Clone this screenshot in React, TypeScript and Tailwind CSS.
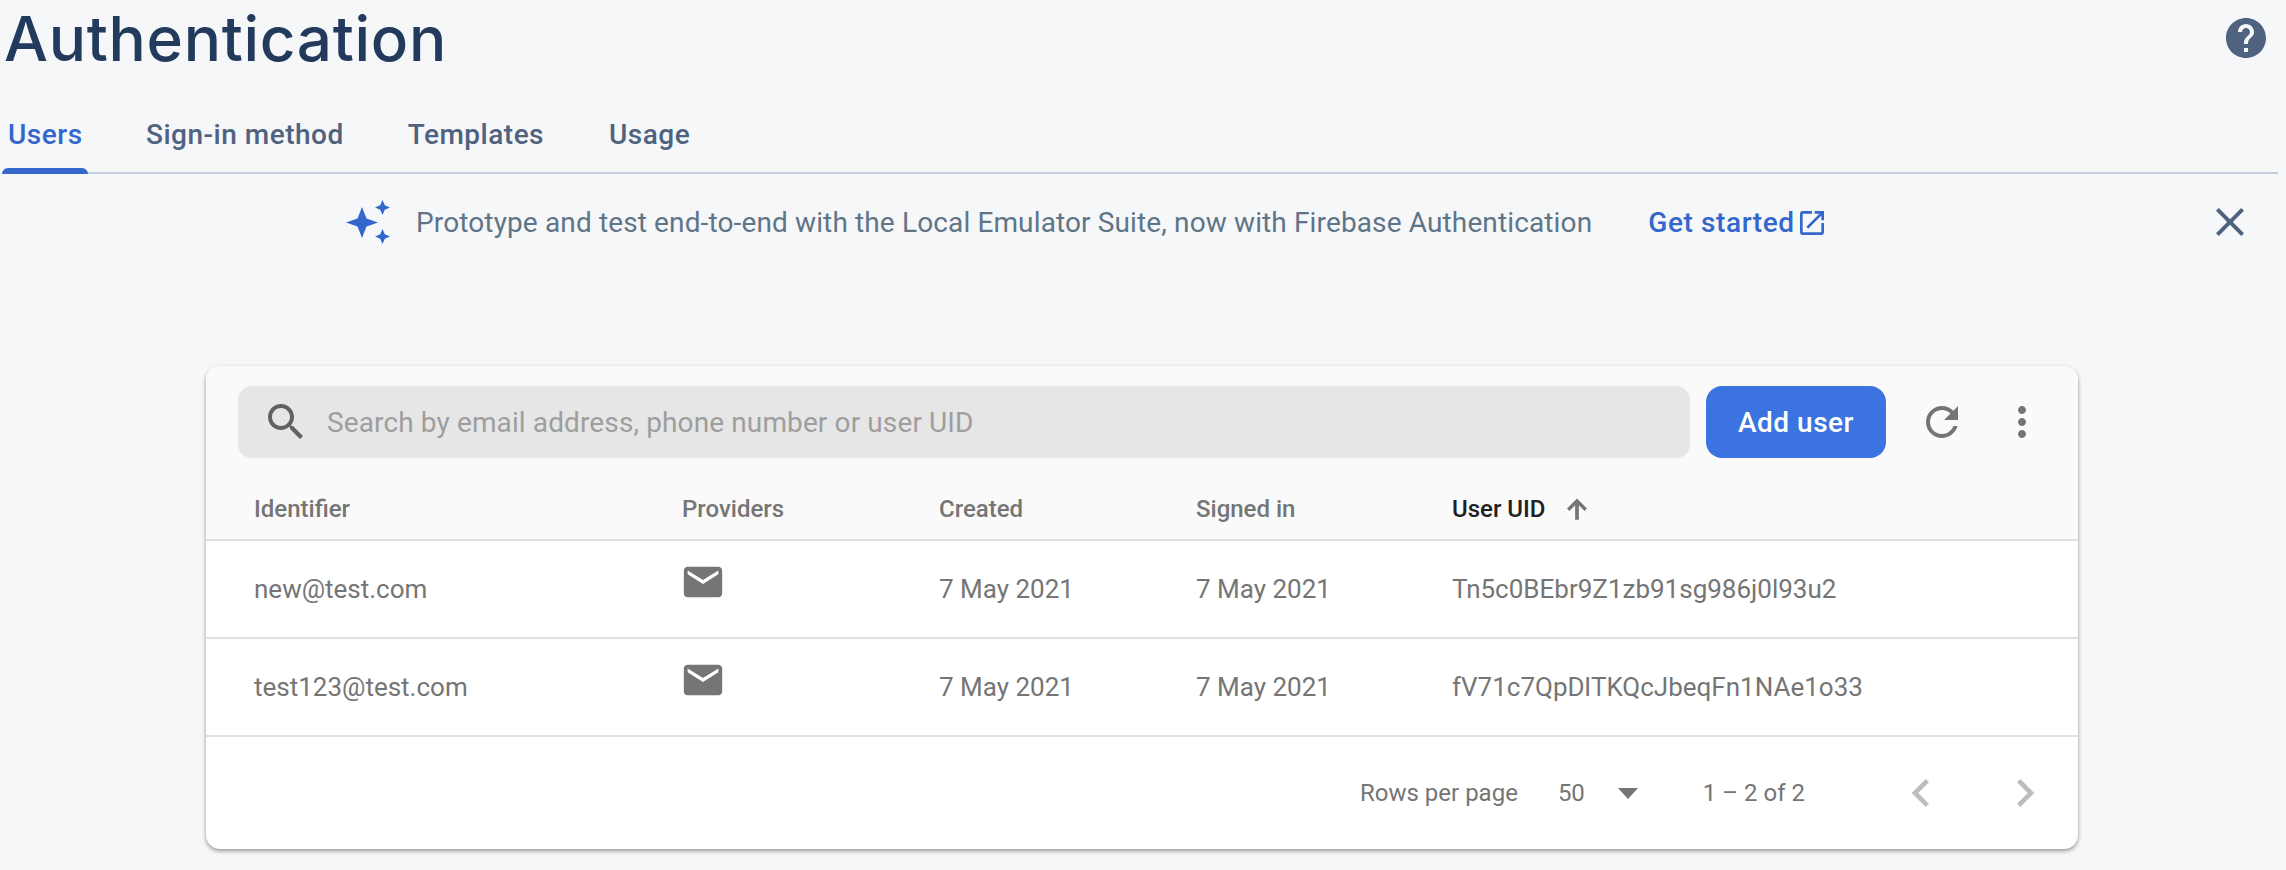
import React from "react";

const users = [
  { email: "new@test.com", created: "7 May 2021", signedIn: "7 May 2021", uid: "Tn5c0BEbr9Z1zb91sg986j0l93u2" },
  { email: "test123@test.com", created: "7 May 2021", signedIn: "7 May 2021", uid: "fV71c7QpDlTKQcJbeqFn1NAe1o33" },
];

function Icon({ d, className }: { d: string; className: string }) {
  return (
    <svg viewBox="0 0 24 24" fill="currentColor" className={className}>
      <path d={d} />
    </svg>
  );
}

const paths = {
  help: "M12 2C6.48 2 2 6.48 2 12s4.48 10 10 10 10-4.48 10-10S17.52 2 12 2zm1 17h-2v-2h2v2zm2.07-7.75l-.9.92C13.45 12.9 13 13.5 13 15h-2v-.5c0-1.1.45-2.1 1.17-2.83l1.24-1.26c.37-.36.59-.86.59-1.41 0-1.1-.9-2-2-2s-2 .9-2 2H8c0-2.21 1.79-4 4-4s4 1.79 4 4c0 .88-.36 1.68-.93 2.25z",
  close: "M19 6.41L17.59 5 12 10.59 6.41 5 5 6.41 10.59 12 5 17.59 6.41 19 12 13.41 17.59 19 19 17.59 13.41 12z",
  open: "M19 19H5V5h7V3H5c-1.11 0-2 .9-2 2v14c0 1.1.89 2 2 2h14c1.1 0 2-.9 2-2v-7h-2v7zM14 3v2h3.59l-9.83 9.83 1.41 1.41L19 6.41V10h2V3h-7z",
  search: "M15.5 14h-.79l-.28-.27C15.41 12.59 16 11.11 16 9.5 16 5.91 13.09 3 9.5 3S3 5.91 3 9.5 5.91 16 9.5 16c1.61 0 3.09-.59 4.23-1.57l.27.28v.79l5 4.99L20.49 19l-4.99-5zm-6 0C7.01 14 5 11.99 5 9.5S7.01 5 9.5 5 14 7.01 14 9.5 11.99 14 9.5 14z",
  refresh: "M17.65 6.35C16.2 4.9 14.21 4 12 4c-4.42 0-7.99 3.58-7.99 8s3.57 8 7.99 8c3.73 0 6.84-2.55 7.73-6h-2.08c-.82 2.33-3.04 4-5.65 4-3.31 0-6-2.69-6-6s2.69-6 6-6c1.66 0 3.14.69 4.22 1.78L13 11h7V4l-2.35 2.35z",
  more: "M12 8c1.1 0 2-.9 2-2s-.9-2-2-2-2 .9-2 2 .9 2 2 2zm0 2c-1.1 0-2 .9-2 2s.9 2 2 2 2-.9 2-2-.9-2-2-2zm0 6c-1.1 0-2 .9-2 2s.9 2 2 2 2-.9 2-2-.9-2-2-2z",
  mail: "M20 4H4c-1.1 0-2 .9-2 2v12c0 1.1.9 2 2 2h16c1.1 0 2-.9 2-2V6c0-1.1-.9-2-2-2zm0 4-8 5-8-5V6l8 5 8-5v2z",
  arrowUp: "M12 3.500L4 11.500l2 2 4.500-4.500V20.500h3V9l4.500 4.500 2-2z",
  prev: "M15.41 7.41L14 6l-6 6 6 6 1.41-1.41L10.83 12z",
  next: "M10 6L8.59 7.41 13.17 12l-4.58 4.59L10 18l6-6z",
};

function Sparkle() {
  return (
    <svg viewBox="0 0 44 44" fill="currentColor" className="w-[44px] h-[44px] text-[#3367cc]">
      <path d="M16 7 L20.500 18.500 L32 22.500 L20.500 26.500 L16 38 L11.500 26.500 L0 22.500 L11.500 18.500Z" />
      <path d="M36.500 0 L38.800 5.200 L44 7.500 L38.800 9.800 L36.500 15 L34.200 9.800 L29 7.500 L34.200 5.200Z" />
      <path d="M36.500 29 L38.800 34.200 L44 36.500 L38.800 38.800 L36.500 44 L34.200 38.800 L29 36.500 L34.200 34.200Z" />
    </svg>
  );
}

export default function App() {
  return (
    <div className="w-[2286px] h-[870px] overflow-hidden bg-[#f6f7f9] font-['Roboto',sans-serif]">
      <div className="flex justify-between items-start h-[82px]">
        <h1 className="pl-[4px] font-['Inter',sans-serif] font-medium text-[62px] leading-[78px] text-[#223a5c] tracking-[0.7px]">Authentication</h1>
        <Icon d={paths.help} className="w-[48px] h-[48px] mt-[14px] mr-[16px] text-[#4f6280]" />
      </div>

      <div className="mx-[2px] mr-[8px] h-[92px] flex items-end border-b-2 border-[#c3cfdf] text-[28px] font-medium tracking-[0.5px] text-[#4f6280]">
        <div className="relative w-[86px] h-[90px] pt-[32px] pl-[6px] text-[#3367cc]">
          Users
          <div className="absolute left-0 right-0 bottom-[-2px] h-[6px] rounded-t-[6px] bg-[#3367cc]" />
        </div>
        <div className="h-[90px] pt-[32px] ml-[58px]">Sign-in method</div>
        <div className="h-[90px] pt-[32px] ml-[64px]">Templates</div>
        <div className="h-[90px] pt-[32px] ml-[65px]">Usage</div>
      </div>

      <div className="flex items-center h-[96px] pl-[346px] pr-[32px]">
        <Sparkle />
        <span className="ml-[26px] mt-[2px] text-[28px] text-[#5f7587] tracking-[0.13px]">
          Prototype and test end-to-end with the Local Emulator Suite, now with Firebase Authentication
        </span>
        <span className="ml-[56px] mt-[2px] text-[28px] font-medium text-[#3367cc] tracking-[0.6px]">Get started</span>
        <Icon d={paths.open} className="ml-[1px] mt-[2px] w-[32px] h-[32px] text-[#3367cc]" />
        <Icon d={paths.close} className="ml-auto w-[48px] h-[48px] text-[#4f6280]" />
      </div>

      <div className="mt-[96px] ml-[206px] w-[1872px] h-[483px] rounded-[14px] bg-white overflow-hidden shadow-[0_2px_4px_rgba(0,0,0,0.4)]">
        <div className="bg-[#fafafa] h-[175px] border-b-2 border-[#e0e0e0]">
          <div className="flex items-center pt-[20px] pl-[32px]">
            <div className="flex items-center w-[1452px] h-[72px] rounded-[14px] bg-[#e6e6e6] pl-[24px]">
              <Icon d={paths.search} className="w-[48px] h-[48px] text-[#616161]" />
              <span className="ml-[17px] mt-[2px] text-[28px] text-[#9e9e9e] tracking-[0.12px]">
                Search by email address, phone number or user UID
              </span>
            </div>
            <button className="ml-[16px] w-[180px] h-[72px] pt-[2px] rounded-[16px] bg-[#3b73e0] text-white text-[28px] font-medium tracking-[0.5px]">
              Add user
            </button>
            <Icon d={paths.refresh} className="ml-[32px] w-[48px] h-[48px] text-[#757575]" />
            <Icon d={paths.more} className="ml-[32px] w-[48px] h-[48px] text-[#757575]" />
          </div>
          <div className="grid grid-cols-[428px_257px_257px_256px_1fr] pl-[48px] mt-[21px] h-[60px] items-center text-[24px] font-medium text-[#757575]">
            <span>Identifier</span>
            <span>Providers</span>
            <span>Created</span>
            <span>Signed in</span>
            <span className="flex items-center text-[#212121]">
              User UID
              <Icon d={paths.arrowUp} className="ml-[16px] w-[30px] h-[30px] text-[#757575]" />
            </span>
          </div>
        </div>

        {users.map((u) => (
          <div
            key={u.uid}
            className="grid grid-cols-[428px_257px_257px_256px_1fr] pl-[48px] h-[98px] items-center border-b-2 border-[#e0e0e0] text-[26px] text-[#757575]"
          >
            <span>{u.email}</span>
            <span className="-mt-[14px] -ml-[2px]">
              <Icon d={paths.mail} className="w-[46px] h-[48px] text-[#757575]" />
            </span>
            <span>{u.created}</span>
            <span>{u.signedIn}</span>
            <span>{u.uid}</span>
          </div>
        ))}

        <div className="flex items-center h-[110px] pt-[2px] pl-[1154px] text-[24px] text-[#757575]">
          <span>Rows per page</span>
          <span className="ml-[40px]">50</span>
          <span className="ml-[33px] w-0 h-0 border-x-[10px] border-x-transparent border-t-[11px] border-t-[#757575]" />
          <span className="ml-[65px]">1 – 2 of 2</span>
          <Icon d={paths.prev} className="ml-[88px] w-[56px] h-[56px] text-[#bdbdbd]" />
          <Icon d={paths.next} className="ml-[48px] w-[56px] h-[56px] text-[#bdbdbd]" />
        </div>
      </div>
    </div>
  );
}
